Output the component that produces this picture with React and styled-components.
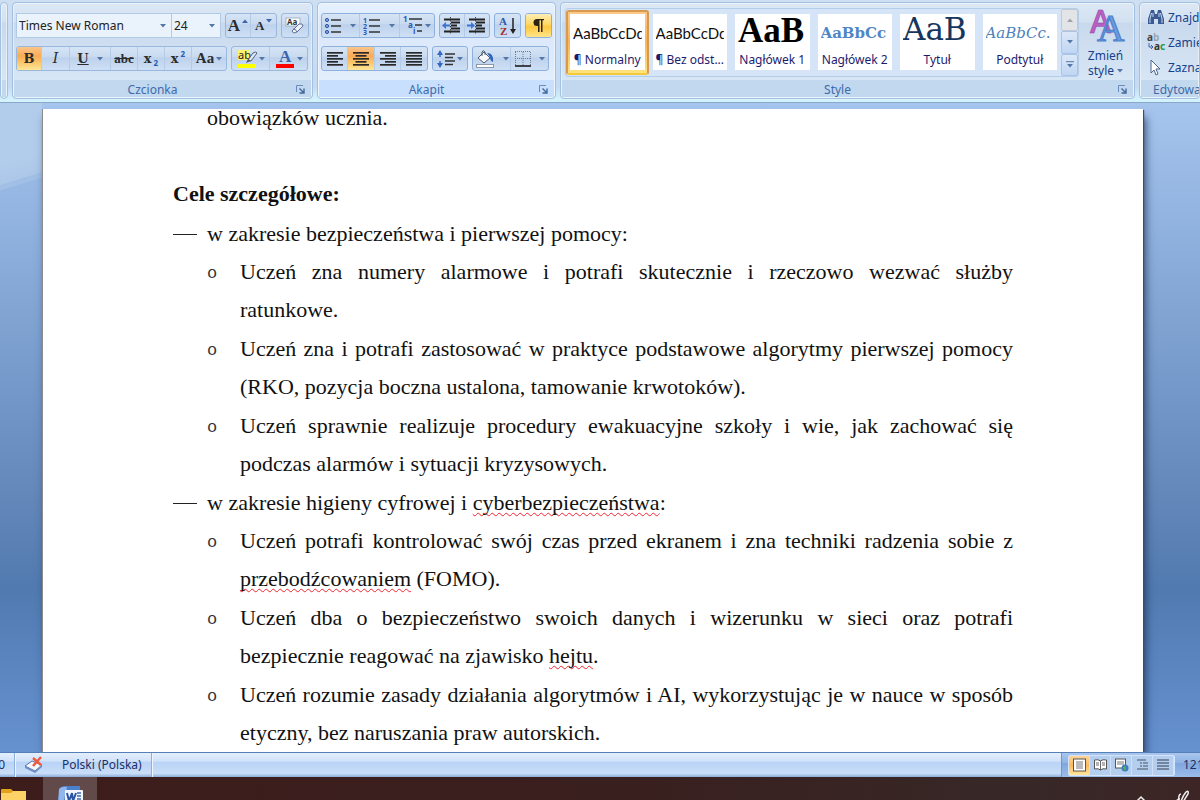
import React from 'react';
import styled, { createGlobalStyle, css } from 'styled-components';

const GlobalStyle = createGlobalStyle`
  * { box-sizing: border-box; }
  html, body, #root { height: 100%; margin: 0; }
  body { overflow: hidden; font-family: "Noto Sans", "Open Sans", sans-serif; font-size: 12px; color: #15428b; }
  button, select { font: inherit; color: inherit; margin: 0; }
  ul, p, h2 { margin: 0; padding: 0; }
  svg { display: block; flex: none; overflow: visible; }
`;

const Window = styled.div`
  display: flex;
  flex-direction: column;
  height: 100vh;
  overflow: hidden;
`;

/* ---------- ribbon ---------- */

const Ribbon = styled.header`
  flex: none;
  display: flex;
  gap: 4px;
  padding: 2px 0 3px;
  background: linear-gradient(#cfdff2, #c5dbf3 85%, #d3f2fc 97%);
  border-bottom: 1px solid #8ba8c8;
`;

const Group = styled.section`
  display: flex;
  flex-direction: column;
  flex: ${(p) => (p.$grow ? '1 1 0' : 'none')};
  width: ${(p) => p.$width || 'auto'};
  min-width: 0;
  height: 97px;
  overflow: hidden;
  border: 1px solid #a3c0e0;
  border-radius: 4px;
  box-shadow: inset 0 0 0 1px rgba(255, 255, 255, 0.45);
  background: ${(p) =>
    p.$hot
      ? 'linear-gradient(#e6f1fd, #dbe8fa 25%, #dfebfb 60%, #e6f1fd)'
      : 'linear-gradient(#dce8f5, #d2e0f0 20%, #c9d9ed 21%, #d9e8f6 90%)'};
`;

const GroupBody = styled.div`
  flex: 1;
  display: flex;
  flex-direction: column;
  gap: 8px;
  padding: 10px 3px 0;
`;

const GroupFooter = styled.footer`
  display: grid;
  grid-template-columns: 1fr 20px;
  align-items: center;
  flex: none;
  height: 17px;
  margin: 0 1px 1px;
  padding-top: 2px;
  padding-left: ${(p) => (p.$start ? 12 : 0)}px;
  text-align: ${(p) => (p.$start ? 'left' : 'center')};
  line-height: 15px;
  color: #3e6aaa;
  background: ${(p) => (p.$hot ? '#c8dffe' : '#c1d8ef')};
  white-space: nowrap;
`;

const Launcher = styled.button`
  padding: 0 0 0 5px;
  border: 0;
  background: none;
`;

const Row = styled.div`
  display: flex;
  gap: 4px;
`;

const ButtonSet = styled.div`
  display: flex;
  height: 25px;
  border: 1px solid ${(p) => (p.$hot ? '#8db0dc' : '#9ab8dd')};
  border-radius: 3px;
  overflow: hidden;
  background: linear-gradient(#d6e4f5, #c8daf0 45%, #bcd1ec 46%, #cfe0f5);
`;

const Tool = styled.button`
  display: flex;
  align-items: center;
  justify-content: center;
  gap: ${(p) => (p.$wide ? 8 : 2)}px;
  width: ${(p) => p.$w}px;
  padding: 0;
  border: 0;
  border-right: 1px solid #b4cbe8;
  background: none;
  color: #2c2c2c;
  line-height: 23px;
  &:last-child { border-right: 0; }
  ${(p) =>
    p.$on &&
    css`
      background: linear-gradient(#fbc58a, #f9ab55 40%, #fcc468 65%, #fee695);
    `}
  ${(p) =>
    p.$glow &&
    css`
      background: linear-gradient(#fdeeb5, #ffd863 45%, #ffc93e 55%, #ffe48a);
    `}
`;

const Glyph = styled.span`
  font-family: ${(p) => (p.$slab ? '"DejaVu Serif", serif' : '"Liberation Serif", serif')};
  font-weight: ${(p) => (p.$bold ? 700 : 400)};
  font-style: ${(p) => (p.$italic ? 'italic' : 'normal')};
  text-decoration: ${(p) => p.$line || 'none'};
  font-size: ${(p) => p.$size}px;
`;

const Script = styled.span`
  align-self: ${(p) => (p.$up ? 'flex-start' : 'flex-end')};
  line-height: 14px;
  font-size: 8px;
  font-weight: 700;
  color: #2a5cb8;
`;

const ArrowMark = styled.span`
  align-self: flex-start;
  padding-top: 5px;
`;

const Field = styled.label`
  display: flex;
  align-items: center;
  width: ${(p) => p.$w}px;
  height: 25px;
  padding-right: 5px;
  border: 1px solid #b3cae6;
  background: #eaf2fb;
  & + & { margin-left: -5px; }
  select {
    flex: 1;
    min-width: 0;
    padding: 0 2px;
    border: 0;
    appearance: none;
    background: none;
    color: #222;
  }
`;

const Gallery = styled.div`
  display: flex;
  flex: 1;
  min-width: 0;
  height: 69px;
  border: 1px solid #b4cde9;
  border-radius: 3px;
  background: #d5e5f7;
`;

const StyleBody = styled.div`
  flex: 1;
  display: flex;
  padding: 5px 2px 0 4px;
`;

const StyleCard = styled.button`
  flex: 1 1 0;
  min-width: 0;
  display: flex;
  margin: 1px 0;
  padding: 2px;
  border: 2px solid ${(p) => (p.$on ? '#d89a4e' : 'transparent')};
  border-bottom-color: ${(p) => (p.$on ? '#f5c93c' : 'transparent')};
  border-radius: 3px;
  background: ${(p) => (p.$on ? 'linear-gradient(#fbc98a, #fbb457 50%, #ffe37c)' : 'none')};
`;

const CardFace = styled.span`
  flex: 1;
  min-width: 0;
  display: grid;
  grid-template-rows: 35px 21px;
  height: 56px;
  padding: 0 3px;
  background: #fff;
  overflow: hidden;
  white-space: nowrap;
  color: #1c1c6e;
`;

const Sample = styled.span`
  overflow: hidden;
  text-align: left;
  font-family: ${(p) => p.$font};
  font-size: ${(p) => p.$size}px;
  font-weight: ${(p) => (p.$bold ? 700 : 400)};
  font-style: ${(p) => (p.$italic ? 'italic' : 'normal')};
  color: ${(p) => p.$color};
  line-height: ${(p) => p.$lh || 39}px;
`;

const CardName = styled.span`
  margin: 0 -3px;
  text-align: center;
  line-height: 21px;
`;

const GalleryScroll = styled.div`
  display: grid;
  grid-template-rows: repeat(3, 1fr);
  width: 17px;
  button {
    display: grid;
    place-items: center;
    padding: 0;
    border: 1px solid #a9c4e6;
    border-radius: 2px;
    background: linear-gradient(#dbe8f8, #c0d6f2);
  }
  button:first-child { border-color: #c4c9d0; background: #e2e4e8; }
`;

const BigButton = styled.button`
  display: flex;
  flex-direction: column;
  align-items: center;
  width: 53px;
  padding: 0;
  border: 0;
  background: none;
  line-height: 15px;
  svg { margin-bottom: 7px; }
  span { display: flex; align-items: center; gap: 3px; }
  span svg { margin: 0; }
`;

const EditList = styled.div`
  flex: 1;
  display: flex;
  flex-direction: column;
  gap: 1px;
  padding: 2px 7px 0;
  button {
    display: flex;
    align-items: center;
    gap: 3px;
    height: 24px;
    padding: 0;
    border: 0;
    background: none;
    white-space: nowrap;
  }
`;

/* ---------- document ---------- */

const Workspace = styled.main`
  flex: 1;
  min-height: 0;
  display: flex;
  flex-direction: column;
  padding: 6px 57px 0 42px;
  overflow: hidden;
  background:
    linear-gradient(163deg, #b2ccec 0, #b2ccec 60px, #adc7e9 78px, #a0bee5 79px, #a3c0e7 83px, transparent 84px) 0 0 / 42px 100px no-repeat,
    linear-gradient(#a6c5ee 0, #8dafdc 22%, #7397c8 45%, #6286b8 62%, #517ab0 75%, #6692d0 100%);
`;

const Sheet = styled.article`
  flex: 1;
  min-height: 0;
  overflow: hidden;
  padding: 0 130px;
  background: #fff;
  border-left: 1px solid #8b8b8b;
  box-shadow: 1px 1px 1px #444c58, 3px 8px 8px rgba(20, 40, 75, 0.7);
  color: #111;
  font-family: "Liberation Serif", serif;
  font-size: 22px;
  line-height: 38px;
`;

const Carry = styled.p`
  margin: -10px 0 38px;
  padding-left: 34px;
`;

const Heading = styled.h2`
  margin-bottom: 2px;
  font-size: inherit;
  font-weight: 700;
`;

const Scope = styled.p`
  display: grid;
  grid-template-columns: 34px 1fr;
  align-items: center;
  &::before { content: ""; width: 24px; height: 1px; background: #222; }
`;

const Goals = styled.ul`
  list-style: none;
  margin-bottom: 1px;
  padding-left: 34px;
`;

const Goal = styled.li`
  display: grid;
  grid-template-columns: 33px 1fr;
  margin-bottom: 1px;
  text-align: justify;
  &::before {
    content: "o";
    font-family: "Liberation Mono", monospace;
    font-size: 17px;
    line-height: 42px;
    color: #333;
  }
`;

const Misspelt = styled.span`
  text-decoration: underline wavy #f0262e 1px;
  text-underline-offset: 2px;
  text-decoration-skip-ink: none;
`;

/* ---------- status bar and taskbar ---------- */

const StatusBar = styled.footer`
  flex: none;
  display: flex;
  height: 25px;
  border-top: 1px solid #567fb8;
  background: linear-gradient(#e4effd, #d0e2fa 35%, #b9d3f6 36%, #c8ddf8 85%, #8bacd9);
  color: #1b2f66;
  line-height: 24px;
  white-space: nowrap;
`;

const StatusCell = styled.div`
  display: flex;
  align-items: center;
  gap: 18px;
  padding: 0 9px;
  border-right: 1px solid #8fb0dc;
  box-shadow: 1px 0 0 #eef5ff;
`;

const PageCell = styled(StatusCell)`
  justify-content: flex-end;
  width: 15px;
  padding-left: 0;
`;

const StatusEnd = styled.div`
  display: flex;
  align-items: center;
  width: 139px;
  margin-left: auto;
  padding-left: 6px;
  overflow: hidden;
  border-left: 1px solid #7396c8;
  background: linear-gradient(#a9c6ee, #8fb3e4 40%, #7ea5dc 41%, #9bbdeb);
`;

const Views = styled.div`
  display: flex;
  flex: none;
  margin-right: 8px;
  border: 1px solid #d4e5fb;
  border-radius: 2px;
  background: #b4cef0;
  button {
    display: grid;
    place-items: center;
    width: 21px;
    height: 19px;
    padding: 0;
    border: 0;
    border-right: 1px solid #cfe0f7;
    background: none;
  }
  button:first-child { background: linear-gradient(#fbd49c, #fbb95f 50%, #ffe79a); }
`;

const Taskbar = styled.nav`
  flex: none;
  display: flex;
  height: 23px;
  overflow: hidden;
  background: linear-gradient(90deg, #3d1d1b, #391f1e 50%, #372827 85%, #3d2526);
`;

const TaskButton = styled.button`
  display: flex;
  align-items: flex-start;
  justify-content: ${(p) => (p.$start ? 'flex-start' : 'center')};
  width: ${(p) => p.$w}px;
  padding: ${(p) => p.$top}px 0 0;
  border: 0;
  overflow: hidden;
  background: ${(p) => (p.$active ? '#634a4a' : 'none')};
`;

const Tray = styled.div`
  display: flex;
  margin-left: auto;
`;

/* ---------- icons ---------- */

const Caret = ({ color = '#5577a8' }) => (
  <svg width="6" height="4" viewBox="0 0 6 4"><path d="M0 0h6L3 3.6z" fill={color} /></svg>
);

const CaretUp = ({ color = '#3a66b0' }) => (
  <svg width="6" height="4" viewBox="0 0 6 4"><path d="M0 4h6L3 .4z" fill={color} /></svg>
);

const LauncherIcon = () => (
  <svg width="9" height="9" viewBox="0 0 9 9" fill="none">
    <path d="M.5 7V.5H7" stroke="#6b8cba" />
    <path d="M3.5 3.5l4 4M8 3.5V8H3.5" stroke="#44689c" strokeWidth="1.4" />
  </svg>
);

const EraserIcon = () => (
  <svg width="20" height="20" viewBox="0 0 20 20">
    <rect x="1" y="2" width="14" height="8" fill="#fff" stroke="#97a5ba" strokeWidth=".8" />
    <text x="2" y="9" fontSize="8" fontWeight="700" fill="#333">Aa</text>
    <path d="M8 14l6-6q4-1 4 2l-6 6q-4 2-5-1z" fill="#eef1f8" stroke="#5d6f92" />
    <path d="M8 13q3 0 4 3" fill="none" stroke="#5d6f92" />
  </svg>
);

const HighlightIcon = () => (
  <svg width="20" height="20" viewBox="0 0 20 20">
    <rect x="1" y="1" width="12" height="10" fill="#fdf36a" />
    <text x="1" y="10" fontSize="11" fill="#222">ab</text>
    <path d="M11 11l5-7q3-2 4 0l-6 8z" fill="#dfe9f7" stroke="#4c607f" /><path d="M9 14l5-2-3-2z" fill="#555" />
    <rect x="1" y="15" width="18" height="4" fill="#ff0" />
  </svg>
);

const FontColorIcon = () => (
  <svg width="20" height="20" viewBox="0 0 20 20">
    <text x="4" y="13" fontSize="17" fontWeight="700" fontFamily="Liberation Serif, serif" fill="#3b63ad">A</text>
    <rect x="1" y="15" width="18" height="4" fill="#f00" />
  </svg>
);

const BulletsIcon = () => (
  <svg width="18" height="18" viewBox="0 0 18 18">
    {[3, 9, 15].map((y) => (
      <g key={y}>
        <circle cx="3" cy={y} r="1.6" fill="#7fa3e0" stroke="#3055a8" />
        <path d={`M7 ${y}h10`} stroke="#333" strokeWidth="1.4" />
      </g>
    ))}
  </svg>
);

const NumberingIcon = () => (
  <svg width="18" height="18" viewBox="0 0 18 18">
    {[3, 9, 15].map((y, i) => (
      <g key={y}>
        <text x="0" y={y + 3} fontSize="7" fontWeight="700" fill="#2e57b5">{i + 1}</text>
        <path d={`M6 ${y}h11`} stroke="#333" strokeWidth="1.4" />
      </g>
    ))}
  </svg>
);

const MultilevelIcon = () => (
  <svg width="20" height="19" viewBox="0 0 20 19">
    <g fontSize="8" fontWeight="700" fill="#2e57b5">
      <text x="0" y="6">1</text><text x="5" y="12">a</text><text x="10" y="18">i</text>
    </g>
    <path d="M6 3h13M12 9h7M14 15h5" stroke="#333" strokeWidth="1.4" />
  </svg>
);

const IndentIcon = ({ out }) => (
  <svg width="20" height="18" viewBox="0 0 20 18">
    <path d="M2 2.5h16M9 5.5h9M9 8.5h6M9 11.5h9M2 14.5h16" stroke="#222" strokeWidth="1.8" />
    <path d="M8.5 0v18" stroke="#444" strokeDasharray="1.5 1.5" />
    <path d={out ? 'M0 8.5l4-3.5v2.5h4v2H4V12z' : 'M8 8.5L4 5v2.5H0v2h4V12z'} fill="#3d73d4" />
  </svg>
);

const SortIcon = () => (
  <svg width="20" height="20" viewBox="0 0 20 20">
    <g fontSize="11" fontWeight="700" fontFamily="Liberation Serif, serif">
      <text x="1" y="9" fill="#2e57a8">A</text><text x="2" y="19" fill="#a02c2c">Z</text>
    </g>
    <path d="M15 2v14" stroke="#222" strokeWidth="1.5" /><path d="M12 13h6l-3 5z" fill="#222" />
  </svg>
);

const PilcrowIcon = () => (
  <svg width="13" height="15" viewBox="0 0 13 15">
    <path d="M12 1H5a3.5 3.5 0 0 0 0 7h1v6h1.500V2.300H9V14h1.500V2.300H12z" fill="#2b2414" />
  </svg>
);

const AlignIcon = ({ kind }) => {
  const widths = [16, 11, 16, 11, 16];
  return (
    <svg width="16" height="14" viewBox="0 0 16 14">
      {widths.map((full, i) => {
        const w = kind === 'justify' ? 16 : full;
        const x = kind === 'right' ? 16 - w : kind === 'center' ? (16 - w) / 2 : 0;
        return <rect key={i} x={x} y={i * 3} width={w} height="1.7" fill="#2a2a2a" />;
      })}
    </svg>
  );
};

const SpacingIcon = () => (
  <svg width="18" height="18" viewBox="0 0 18 18">
    <path d="M3 4v3M3 11v3" stroke="#3568c4" strokeWidth="1.5" />
    <path d="M0 5l3-5 3 5zM0 13l3 5 3-5z" fill="#3568c4" />
    <path d="M8 4h10M8 7.5h8M8 11h10M8 14.5h8" stroke="#333" strokeWidth="1.5" />
  </svg>
);

const BucketIcon = () => (
  <svg width="20" height="20" viewBox="0 0 20 20">
    <path d="M3 9l6-6 6 6-6 5z" fill="#f6f8fb" stroke="#4d5c70" />
    <path d="M7 7V3q1-3 3 0v3" fill="none" stroke="#4d5c70" />
    <path d="M12 4q7 0 6 9-3-1-3-5z" fill="#2f62bd" />
    <rect x="1.5" y="15.5" width="17" height="3" fill="#fff" stroke="#8d99a8" />
  </svg>
);

const BorderIcon = () => (
  <svg width="16" height="16" viewBox="0 0 16 16" fill="none">
    <path d="M.5 1v13M8 1v13M15.5 1v13M0 .5h16M0 7.5h16" stroke="#6d7c92" strokeDasharray="1 1" />
    <path d="M0 15h16" stroke="#111" strokeWidth="1.6" />
  </svg>
);

const ChangeStylesIcon = () => (
  <svg width="36" height="33" viewBox="0 0 36 33">
    <text x="2" y="25" fontSize="32" fontWeight="600" fontFamily="Open Sans, sans-serif" fill="#b95fc3" stroke="#8e3d9c" strokeWidth=".5">A</text>
    <text x="9" y="33" fontSize="38" fontFamily="Liberation Serif, serif" fill="#6b9ce2" stroke="#4f82cc" strokeWidth="1.2">A</text>
  </svg>
);

const BinocularsIcon = () => (
  <svg width="18" height="17" viewBox="0 0 18 17">
    <path d="M4 1h3l1 4h2l1-4h3l3 9v5h-6v-5H7v5H1v-5z" fill="#3a5a94" />
    <path d="M4.5 4L3 10v4M6 4v4M12 4v4M13.5 4l1.500 6v4" stroke="#c6d8f2" fill="none" />
  </svg>
);

const ReplaceIcon = () => (
  <svg width="18" height="19" viewBox="0 0 18 19">
    <g fontSize="10" fontWeight="700">
      <text x="0" y="8" fill="#444">a</text><text x="6" y="8" fill="#9aa6b6">b</text>
      <text x="7" y="17" fill="#333">a</text><text x="13" y="17" fill="#2a9a35">c</text>
    </g>
    <path d="M2 10v4h3M4 12l2 2-2 2" fill="none" stroke="#3b63ad" />
  </svg>
);

const PointerIcon = () => (
  <svg width="18" height="17" viewBox="0 0 18 17">
    <path d="M4 1v13l3-3 2 5 2-1-2-5h4z" fill="#fff" stroke="#51648a" />
  </svg>
);

const ProofIcon = () => (
  <svg width="20" height="18" viewBox="0 0 20 18">
    <path d="M1 10l7-5 10 4-7 6z" fill="#f4f7fc" stroke="#5673a6" /><path d="M1 10v2l10 5 7-6V9l-7 6z" fill="#6f8fc4" />
    <path d="M9 2l8 7M17 1L9 10" stroke="#ee5a3c" strokeWidth="2.4" />
  </svg>
);

const ViewIcon = ({ kind }) => (
  <svg width="15" height="14" viewBox="0 0 15 14" fill="none">
    {kind === 'print' && <><rect x="1.5" y="1" width="12" height="12" fill="#fff" stroke="#555" /><path d="M4 4h7M4 6h7M4 8h7M4 10h7" stroke="#777" /></>}
    {kind === 'read' && <><path d="M1.5 2q4-1 6 1 2-2 6-1v9q-4-1-6 1-2-2-6-1z" fill="#fff" stroke="#555" /><path d="M7.5 3v9M3 5h3M3 7h3M9 5h3M9 7h3" stroke="#666" /></>}
    {kind === 'web' && <><rect x="1.5" y="1" width="10" height="9" fill="#fff" stroke="#555" /><path d="M3 4h7M3 6h7" stroke="#777" /><circle cx="11" cy="10" r="3.5" fill="#3c7cc0" /><path d="M9 9q3-2 3 1t-2 2z" fill="#53b04f" /></>}
    {kind === 'outline' && <path d="M2 2h9M5 5h2M8 5h5M5 8h2M8 8h5M2 11h11" stroke="#6c7d94" strokeWidth="1.3" />}
    {kind === 'draft' && <path d="M1 2h12M1 5h12M1 8h12M1 11h12" stroke="#5d6d84" strokeWidth="1.6" />}
  </svg>
);

const FolderIcon = () => (
  <svg width="26" height="14" viewBox="0 0 26 14">
    <path d="M1 1q0-1 1-1h9l2 2h12q1 0 1 1v11H1z" fill="#e3a21c" /><path d="M1 4h10l2-2h13v12H1z" fill="#fdd267" />
  </svg>
);

const WordIcon = () => (
  <svg width="27" height="18" viewBox="0 0 27 18">
    <path d="M2 4q1-4 7-4h14v6H8v12H0Q3 10 2 4z" fill="#4c7fca" /><path d="M2 3q3-3 8-2l-4 17H1z" fill="#8fb7ee" />
    <rect x="8" y="4" width="18" height="14" rx="1" fill="#f3f7fd" />
    <path d="M10 7l2 8 3-8 1 8 3-8" fill="none" stroke="#2b55a5" strokeWidth="2" /><path d="M20 7h4M20 10h4M20 13h4" stroke="#3e68b4" strokeWidth="1.5" />
  </svg>
);

/* ---------- content ---------- */

const SERIF = '"Liberation Serif", serif';
const CAMBRIA = '"DejaVu Serif", serif';
const SANS = 'Lato, "Open Sans", sans-serif';

const styleCards = [
  { name: '¶ Normalny', sample: 'AaBbCcDd', font: SANS, size: 15, color: '#111', on: true },
  { name: '¶ Bez odst...', sample: 'AaBbCcDd', font: SANS, size: 15, color: '#111' },
  { name: 'Nagłówek 1', sample: 'AaB', font: SERIF, size: 35, bold: true, color: '#000', lh: 33 },
  { name: 'Nagłówek 2', sample: 'AaBbCc', font: CAMBRIA, size: 15, bold: true, color: '#4f86c6' },
  { name: 'Tytuł', sample: 'AaB', font: CAMBRIA, size: 31, color: '#17365d', lh: 31 },
  { name: 'Podtytuł', sample: 'AaBbCc.', font: CAMBRIA, size: 15, italic: true, color: '#4f81bd' },
];

const RibbonGroup = ({ label, hot, grow, width, launcher = true, children }) => (
  <Group $hot={hot} $grow={grow} $width={width} aria-label={label}>
    {children}
    <GroupFooter $hot={hot} $start={!launcher}>
      <span>{label}</span>
      {launcher && <Launcher aria-label={`${label}: więcej opcji`}><LauncherIcon /></Launcher>}
    </GroupFooter>
  </Group>
);

export default function App() {
  return (
    <Window>
      <GlobalStyle />
      <Ribbon>
        <Group $width="8px" aria-hidden="true">
          <GroupBody />
          <GroupFooter />
        </Group>

        <RibbonGroup label="Czcionka" width="301px">
          <GroupBody>
            <Row>
              <Field $w={157}>
                <select aria-label="Czcionka"><option>Times New Roman</option></select>
                <Caret />
              </Field>
              <Field $w={50}>
                <select aria-label="Rozmiar czcionki"><option>24</option></select>
                <Caret />
              </Field>
              <ButtonSet>
                <Tool $w={26} aria-label="Zwiększ czcionkę"><Glyph $bold $size={17}>A</Glyph><ArrowMark><CaretUp /></ArrowMark></Tool>
                <Tool $w={25} aria-label="Zmniejsz czcionkę"><Glyph $bold $size={13}>A</Glyph><ArrowMark><Caret color="#3a66b0" /></ArrowMark></Tool>
              </ButtonSet>
              <ButtonSet><Tool $w={26} aria-label="Wyczyść formatowanie"><EraserIcon /></Tool></ButtonSet>
            </Row>
            <Row>
              <ButtonSet>
                <Tool $w={25} $on><Glyph $slab $bold $size={13}>B</Glyph></Tool>
                <Tool $w={28}><Glyph $slab $italic $size={14}>I</Glyph></Tool>
                <Tool $w={41} $wide><Glyph $slab $bold $size={13} $line="underline">U</Glyph><Caret /></Tool>
                <Tool $w={27}><Glyph $bold $size={13} $line="line-through">abc</Glyph></Tool>
                <Tool $w={27}><Glyph $slab $bold $size={13}>x</Glyph><Script>2</Script></Tool>
                <Tool $w={27}><Glyph $slab $bold $size={13}>x</Glyph><Script $up>2</Script></Tool>
                <Tool $w={34}><Glyph $bold $size={15}>Aa</Glyph><Caret /></Tool>
              </ButtonSet>
              <ButtonSet>
                <Tool $w={38} aria-label="Kolor wyróżnienia"><HighlightIcon /><Caret /></Tool>
                <Tool $w={37} aria-label="Kolor czcionki"><FontColorIcon /><Caret /></Tool>
              </ButtonSet>
            </Row>
          </GroupBody>
        </RibbonGroup>

        <RibbonGroup label="Akapit" hot width="239px">
          <GroupBody>
            <Row>
              <ButtonSet $hot>
                <Tool $w={38} $wide aria-label="Punktory"><BulletsIcon /><Caret /></Tool>
                <Tool $w={41} $wide aria-label="Numerowanie"><NumberingIcon /><Caret /></Tool>
                <Tool $w={34} aria-label="Lista wielopoziomowa"><MultilevelIcon /><Caret /></Tool>
              </ButtonSet>
              <ButtonSet $hot>
                <Tool $w={25} aria-label="Zmniejsz wcięcie"><IndentIcon out /></Tool>
                <Tool $w={25} aria-label="Zwiększ wcięcie"><IndentIcon /></Tool>
              </ButtonSet>
              <ButtonSet $hot><Tool $w={25} aria-label="Sortuj"><SortIcon /></Tool></ButtonSet>
              <ButtonSet $hot><Tool $w={25} $glow aria-label="Pokaż wszystko"><PilcrowIcon /></Tool></ButtonSet>
            </Row>
            <Row>
              <ButtonSet $hot>
                <Tool $w={26} aria-label="Do lewej"><AlignIcon kind="left" /></Tool>
                <Tool $w={27} $on aria-label="Wyśrodkuj"><AlignIcon kind="center" /></Tool>
                <Tool $w={26} aria-label="Do prawej"><AlignIcon kind="right" /></Tool>
                <Tool $w={26} aria-label="Wyjustuj"><AlignIcon kind="justify" /></Tool>
              </ButtonSet>
              <ButtonSet $hot><Tool $w={34} aria-label="Interlinia"><SpacingIcon /><Caret /></Tool></ButtonSet>
              <ButtonSet $hot>
                <Tool $w={38} $wide aria-label="Cieniowanie"><BucketIcon /><Caret /></Tool>
                <Tool $w={37} $wide aria-label="Obramowanie"><BorderIcon /><Caret /></Tool>
              </ButtonSet>
            </Row>
          </GroupBody>
        </RibbonGroup>

        <RibbonGroup label="Style" grow>
          <StyleBody>
            <Gallery>
              {styleCards.map((c) => (
                <StyleCard key={c.name} $on={c.on}>
                  <CardFace>
                    <Sample $font={c.font} $size={c.size} $bold={c.bold} $italic={c.italic} $color={c.color} $lh={c.lh}>{c.sample}</Sample>
                    <CardName>{c.name}</CardName>
                  </CardFace>
                </StyleCard>
              ))}
              <GalleryScroll>
                <button aria-label="W górę"><CaretUp color="#a0a4ab" /></button>
                <button aria-label="W dół"><Caret /></button>
                <button aria-label="Więcej"><svg width="8" height="7" viewBox="0 0 8 7"><path d="M0 .7h8" stroke="#5577a8" /><path d="M1 3h6L4 6.6z" fill="#5577a8" /></svg></button>
              </GalleryScroll>
            </Gallery>
            <BigButton>
              <ChangeStylesIcon />
              Zmień
              <span>style <Caret /></span>
            </BigButton>
          </StyleBody>
        </RibbonGroup>

        <RibbonGroup label="Edytowanie" width="61px" launcher={false}>
          <EditList>
            <button><BinocularsIcon />Znajdź</button>
            <button><ReplaceIcon />Zamień</button>
            <button><PointerIcon />Zaznacz</button>
          </EditList>
        </RibbonGroup>
      </Ribbon>

      <Workspace>
        <Sheet>
          <Carry>obowiązków ucznia.</Carry>
          <Heading>Cele szczegółowe:</Heading>
          <Scope>w zakresie bezpieczeństwa i pierwszej pomocy:</Scope>
          <Goals>
            <Goal><span>Uczeń zna numery alarmowe i potrafi skutecznie i rzeczowo wezwać służby ratunkowe.</span></Goal>
            <Goal><span>Uczeń zna i potrafi zastosować w praktyce podstawowe algorytmy pierwszej pomocy (RKO, pozycja boczna ustalona, tamowanie krwotoków).</span></Goal>
            <Goal><span>Uczeń sprawnie realizuje procedury ewakuacyjne szkoły i wie, jak zachować się podczas alarmów i sytuacji kryzysowych.</span></Goal>
          </Goals>
          <Scope><span>w zakresie higieny cyfrowej i <Misspelt>cyberbezpieczeństwa</Misspelt>:</span></Scope>
          <Goals>
            <Goal><span>Uczeń potrafi kontrolować swój czas przed ekranem i zna techniki radzenia sobie z <Misspelt>przebodźcowaniem</Misspelt> (FOMO).</span></Goal>
            <Goal><span>Uczeń dba o bezpieczeństwo swoich danych i wizerunku w sieci oraz potrafi bezpiecznie reagować na zjawisko <Misspelt>hejtu</Misspelt>.</span></Goal>
            <Goal><span>Uczeń rozumie zasady działania algorytmów i AI, wykorzystując je w nauce w sposób etyczny, bez naruszania praw autorskich.</span></Goal>
          </Goals>
        </Sheet>
      </Workspace>

      <StatusBar>
        <PageCell>0</PageCell>
        <StatusCell><ProofIcon />Polski (Polska)</StatusCell>
        <StatusEnd>
          <Views>
            {['print', 'read', 'web', 'outline', 'draft'].map((k) => (
              <button key={k} aria-label={`Widok: ${k}`}><ViewIcon kind={k} /></button>
            ))}
          </Views>
          121%
        </StatusEnd>
      </StatusBar>
      <Taskbar>
        <TaskButton $w={43} $top={12} $start aria-label="Eksplorator plików"><FolderIcon /></TaskButton>
        <TaskButton $w={54} $top={9} $active aria-label="Microsoft Word"><WordIcon /></TaskButton>
        <Tray>
          <TaskButton $w={46} $top={18} aria-label="Pokaż ukryte ikony">
            <svg width="10" height="7" viewBox="0 0 10 7"><path d="M1 6l4-4 4 4" fill="none" stroke="#eee" strokeWidth="1.5" /></svg>
          </TaskButton>
          <TaskButton $w={36} $top={13} aria-label="Pióro">
            <svg width="14" height="12" viewBox="0 0 14 12"><path d="M6 12q1-5 5-10 3-2 2 2L8 12M6 4q-3 0-2 8M1 12q1-3 4-3" fill="none" stroke="#eee" strokeWidth="1.5" /></svg>
          </TaskButton>
        </Tray>
      </Taskbar>
    </Window>
  );
}
